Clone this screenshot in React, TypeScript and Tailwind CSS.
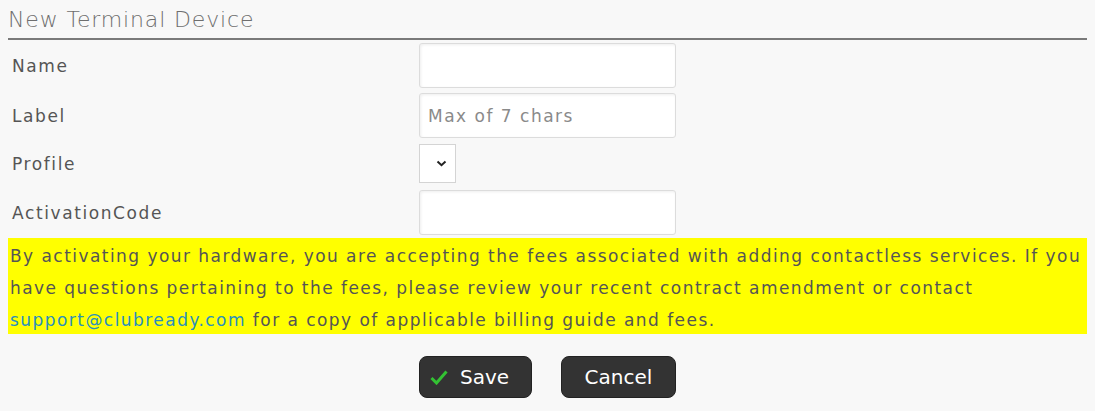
import React from "react";

export default function App() {
  const font = { fontFamily: "'DejaVu Sans', 'Open Sans', sans-serif" };
  const inputCls =
    "w-[257px] h-[45px] bg-white border border-[#dcdcdc] rounded-[3px] shadow-[inset_1px_1px_3px_rgba(0,0,0,0.07)]";
  const labelCls = "w-[411px] pl-1 pt-[3px] text-[17px] tracking-[1.6px]";
  return (
    <div className="w-[1095px] h-[411px] bg-[#f8f8f8] px-2 text-[#555]" style={font}>
      <div className="pt-[7px] border-b-2 border-[#7a7a7a] h-[40px]">
        <div className="text-[22px] leading-[26px] text-[#6e6e6e] font-extralight tracking-[0.85px]">New Terminal Device</div>
      </div>
      <div className="flex flex-col">
        <div className="flex items-center mt-[3px] h-[45px]">
          <div className={labelCls}>Name</div>
          <input className={inputCls} />
        </div>
        <div className="flex items-center mt-[5px] h-[45px]">
          <div className={labelCls}>Label</div>
          <input
            placeholder="Max of 7 chars"
            className={inputCls + " px-2 text-[17px] tracking-[1.5px] placeholder:text-[#8a8a8a]"}
            style={font}
          />
        </div>
        <div className="flex items-center mt-[6px] h-[39px]">
          <div className={labelCls}>Profile</div>
          <div className="w-[37px] h-[39px] bg-white border border-[#d4d4d4] flex items-center justify-end pr-[8px]">
            <svg width="11" height="7" viewBox="0 0 11 7">
              <path d="M1.5 1.5 L5.5 5.2 L9.5 1.5" fill="none" stroke="#222" strokeWidth="2" />
            </svg>
          </div>
        </div>
        <div className="flex items-center mt-[7px] h-[45px]">
          <div className={labelCls}>ActivationCode</div>
          <input className={inputCls} />
        </div>
      </div>
      <div className="mt-[3px] bg-[#ffff00] h-[96px] pl-[2px] pt-[2px] text-[17px] leading-[32px] text-[#555] tracking-[1.45px] whitespace-nowrap">
        By activating your hardware, you are accepting the fees associated with adding contactless services. If you
        <br />
        have questions pertaining to the fees, please review your recent contract amendment or contact
        <br />
        <span className="text-[#2a8fbd]">support@clubready.com</span> for a copy of applicable billing guide and fees.
      </div>
      <div className="flex mt-[22px] pl-[411px] gap-[29px]">
        <button
          className="w-[113px] h-[42px] bg-[#333] rounded-[8px] border border-[#222] text-white text-[20px] flex items-center justify-start gap-[12px] pl-[10px]"
          style={font}
        >
          <svg width="18" height="15" viewBox="0 0 18 15">
            <path d="M1.5 8 L6.5 13 L16.5 1.5" fill="none" stroke="#33c233" strokeWidth="3" />
          </svg>
          Save
        </button>
        <button
          className="w-[115px] h-[42px] bg-[#333] rounded-[8px] border border-[#222] text-white text-[20px] flex items-center justify-center"
          style={font}
        >
          Cancel
        </button>
      </div>
    </div>
  );
}
